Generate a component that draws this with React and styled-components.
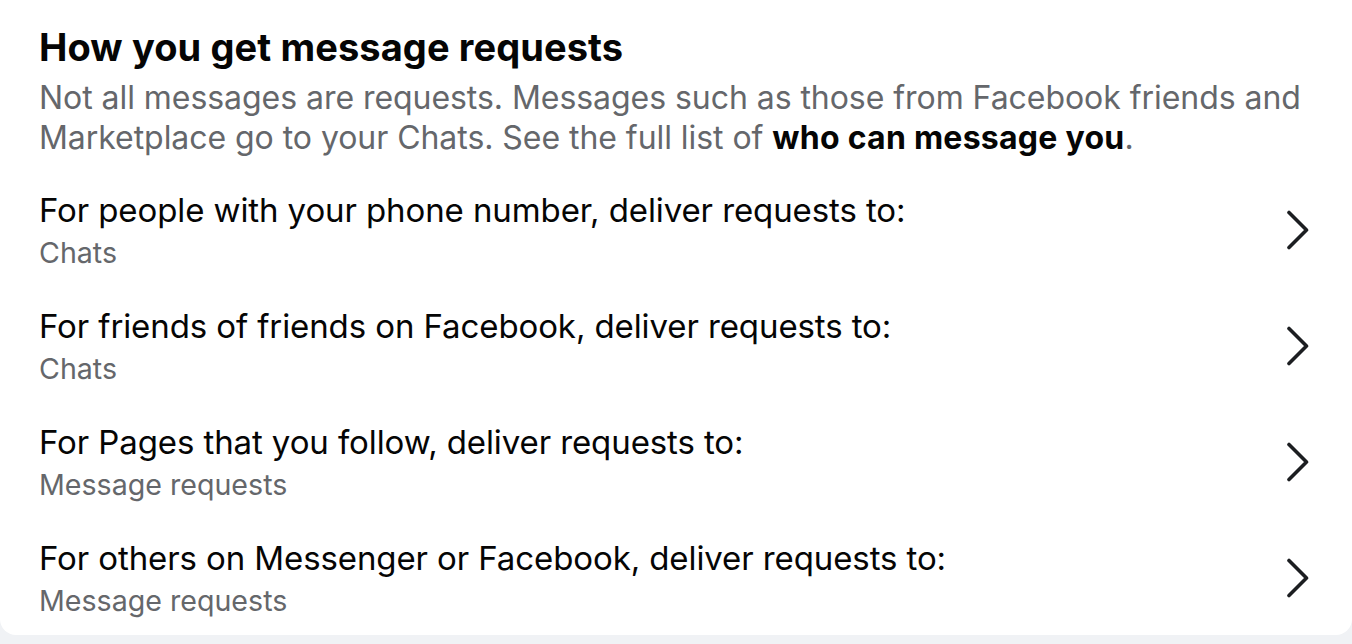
import React from "react";
import styled, { createGlobalStyle } from "styled-components";

const Global = createGlobalStyle`
  html, body { margin: 0; padding: 0; background: #f0f2f5; }
  body { font-family: Inter, "Noto Sans", sans-serif; -webkit-font-smoothing: antialiased; }
`;

const Page = styled.div`
  width: 1352px;
  height: 644px;
  overflow: hidden;
  background: #f0f2f5;
`;

const Card = styled.section`
  background: #ffffff;
  border-radius: 0 0 16px 16px;
  padding-top: 27px;
  height: 608px;
  overflow: hidden;
`;

const Header = styled.div`
  padding: 0 40px 16px 39px;
`;

const Title = styled.h2`
  margin: 0;
  font-size: 38px;
  line-height: 40px;
  font-weight: 700;
  color: #050505;
  letter-spacing: 0.1px;
`;

const Desc = styled.p`
  margin: 11px 0 0 0;
  font-size: 32px;
  line-height: 40px;
  font-weight: 400;
  color: #65676b;
  letter-spacing: -0.05px;
`;

const Strong = styled.strong`
  color: #050505;
  font-weight: 700;
  letter-spacing: 0.25px;
`;

const List = styled.div`
  display: flex;
  flex-direction: column;
`;

const Row = styled.div`
  display: flex;
  align-items: center;
  height: 116px;
  padding: 16px 40px 21px 39px;
  box-sizing: border-box;
  cursor: pointer;
`;

const RowText = styled.div`
  flex: 1;
  display: flex;
  flex-direction: column;
  gap: 7px;
`;

const RowTitle = styled.div`
  font-size: 33px;
  line-height: 40px;
  color: #050505;
  letter-spacing: -0.1px;
`;

const RowSub = styled.div`
  font-size: 28.6px;
  line-height: 32px;
  color: #65676b;
`;

const Chevron = styled.svg`
  width: 26px;
  height: 40px;
  flex: none;
  margin-right: 1px;
`;

const rows = [
  ["For people with your phone number, deliver requests to:", "Chats"],
  ["For friends of friends on Facebook, deliver requests to:", "Chats"],
  ["For Pages that you follow, deliver requests to:", "Message requests"],
  ["For others on Messenger or Facebook, deliver requests to:", "Message requests"],
];

export default function App() {
  return (
    <Page>
      <Global />
      <Card>
        <Header>
          <Title>How you get message requests</Title>
          <Desc>
            Not all messages are requests. Messages such as those from Facebook friends and
            Marketplace go to your Chats. See the full list of <Strong>who can message you</Strong>.
          </Desc>
        </Header>
        <List>
          {rows.map(([t, s]) => (
            <Row key={t}>
              <RowText>
                <RowTitle>{t}</RowTitle>
                <RowSub>{s}</RowSub>
              </RowText>
              <Chevron viewBox="0 0 26 40">
                <path d="M4 2.5 L21.5 20 L4 37.5" fill="none" stroke="#1c1e21" strokeWidth="3.6" strokeLinecap="round" strokeLinejoin="round" />
              </Chevron>
            </Row>
          ))}
        </List>
      </Card>
    </Page>
  );
}
